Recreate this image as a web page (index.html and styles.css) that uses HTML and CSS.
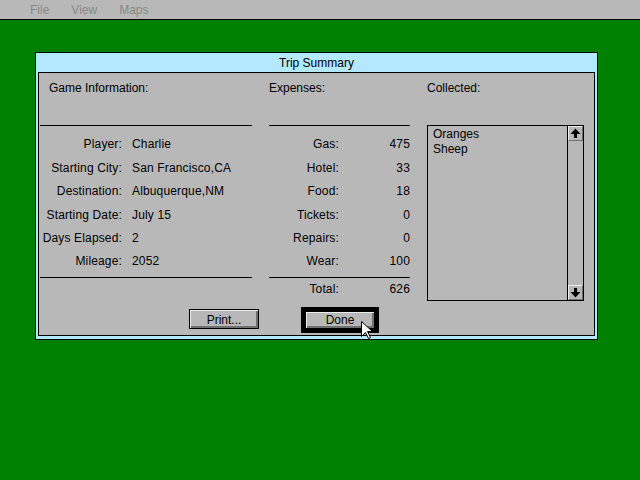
FILE: index.html
```html
<!DOCTYPE html>
<html>
<head>
<meta charset="utf-8">
<link rel="stylesheet" href="styles.css">
</head>
<body>
<div class="menubar"><span>File</span><span>View</span><span>Maps</span></div>
<div class="dialog">
  <div class="title">Trip Summary</div>
  <div class="panel">
    <div class="columns">
      <div class="col info">
        <div class="head">Game Information:</div>
        <div class="rule"></div>
        <div class="rows">
          <div class="row"><span class="lbl">Player:</span><span class="val">Charlie</span></div>
          <div class="row"><span class="lbl">Starting City:</span><span class="val">San Francisco,CA</span></div>
          <div class="row"><span class="lbl">Destination:</span><span class="val">Albuquerque,NM</span></div>
          <div class="row"><span class="lbl">Starting Date:</span><span class="val">July 15</span></div>
          <div class="row"><span class="lbl">Days Elapsed:</span><span class="val">2</span></div>
          <div class="row"><span class="lbl">Mileage:</span><span class="val">2052</span></div>
        </div>
        <div class="rule"></div>
      </div>
      <div class="col expenses">
        <div class="head">Expenses:</div>
        <div class="rule"></div>
        <div class="rows">
          <div class="row"><span class="lbl">Gas:</span><span class="val">475</span></div>
          <div class="row"><span class="lbl">Hotel:</span><span class="val">33</span></div>
          <div class="row"><span class="lbl">Food:</span><span class="val">18</span></div>
          <div class="row"><span class="lbl">Tickets:</span><span class="val">0</span></div>
          <div class="row"><span class="lbl">Repairs:</span><span class="val">0</span></div>
          <div class="row"><span class="lbl">Wear:</span><span class="val">100</span></div>
        </div>
        <div class="rule"></div>
        <div class="row total"><span class="lbl">Total:</span><span class="val">626</span></div>
      </div>
      <div class="col collected">
        <div class="head">Collected:</div>
        <div class="listbox">
          <div class="items">
            <div class="item">Oranges</div>
            <div class="item">Sheep</div>
          </div>
          <div class="scrollbar">
            <div class="sbtn"><svg width="13" height="13" viewBox="0 0 13 13"><polygon points="6.5,1.5 11.5,7 8,7 8,11 5,11 5,7 1.5,7" fill="#000"/></svg></div>
            <div class="track"></div>
            <div class="sbtn"><svg width="13" height="13" viewBox="0 0 13 13"><polygon points="6.5,11.5 11.5,6 8,6 8,2 5,2 5,6 1.5,6" fill="#000"/></svg></div>
          </div>
        </div>
      </div>
    </div>
    <div class="footer">
      <button class="btn print">Print...</button>
      <div class="default-ring"><button class="btn done">Done</button></div>
    </div>
  </div>
</div>
<svg class="cursor" width="12" height="19" viewBox="0 0 12 19"><polygon points="0.5,0.5 0.5,15.5 4.5,11.5 7.5,17.5 9.5,16.5 6.5,10.5 11.5,10.5" fill="#fff" stroke="#000" stroke-width="1"/></svg>
</body>
</html>
```
FILE: styles.css
```css
html, body {
  margin: 0;
  padding: 0;
}
body {
  background: #008000;
  width: 640px;
  height: 480px;
  overflow: hidden;
  font-family: "Liberation Sans", Arial, sans-serif;
  font-size: 12px;
  color: #000;
}
.menubar {
  box-sizing: border-box;
  height: 20px;
  padding-top: 1px;
  line-height: 18px;
  background: #b8b8b8;
  border-bottom: 1px solid #000;
  padding-left: 30px;
  display: flex;
  gap: 22px;
  color: #888888;
}
.dialog {
  box-sizing: border-box;
  margin: 32px 0 0 35px;
  width: 563px;
  height: 288px;
  border: 1px solid #000;
  background: #b4e8ff;
  padding: 0 2px 3px 2px;
}
.title {
  box-sizing: border-box;
  height: 19px;
  padding-top: 1px;
  line-height: 18px;
  text-align: center;
}
.panel {
  box-sizing: border-box;
  height: 264px;
  border: 1px solid #000;
  background: #b8b8b8;
}
.columns {
  display: flex;
  height: 228px;
  padding-left: 1px;
  gap: 17px;
}
.col {
  display: flex;
  flex-direction: column;
}
.info { width: 212px; }
.expenses { width: 141px; }
.collected { width: 157px; }
.head {
  box-sizing: border-box;
  height: 52px;
  padding-top: 8px;
  line-height: 14px;
}
.info .head { padding-left: 9px; }
.rule {
  height: 1px;
  background: #000;
}
.rows {
  padding: 7.4px 0 3.2px;
}
.row {
  display: flex;
  height: 23.4px;
  line-height: 23.4px;
  white-space: nowrap;
  letter-spacing: 0.15px;
}
.info .lbl {
  width: 82px;
  text-align: right;
  margin-right: 10px;
}
.expenses .lbl {
  width: 70px;
  text-align: right;
}
.expenses .val {
  flex: 1;
  text-align: right;
}
.row.total {
  box-sizing: border-box;
  height: 20px;
  padding-top: 1px;
  line-height: 20px;
}
.listbox {
  box-sizing: border-box;
  height: 176px;
  border: 1px solid #000;
  display: flex;
}
.items {
  flex: 1;
  padding: 1px 0 0 5px;
}
.item {
  line-height: 15px;
}
.scrollbar {
  width: 15px;
  border-left: 1px solid #000;
  display: flex;
  flex-direction: column;
}
.sbtn {
  box-sizing: border-box;
  width: 15px;
  height: 15px;
  background: #b8b8b8;
  border-top: 1px solid #ececec;
  border-left: 1px solid #ececec;
  border-right: 1px solid #707070;
  border-bottom: 1px solid #707070;
}
.sbtn svg {
  display: block;
}
.track { flex: 1; }
.footer {
  display: flex;
  align-items: flex-start;
  padding-left: 150px;
}
.btn {
  box-sizing: border-box;
  width: 70px;
  padding: 0;
  margin: 0;
  font-family: inherit;
  font-size: 12px;
  color: #000;
  background: #b8b8b8;
  border: 1px solid #000;
  box-shadow: inset 1px 1px 0 #ececec, inset -2px -2px 0 #707070;
  text-align: center;
}
.print {
  height: 20px;
  margin-top: 8px;
  padding-top: 1px;
}
.default-ring {
  box-sizing: border-box;
  width: 78px;
  height: 26px;
  border: 4px solid #000;
  margin: 6px 0 0 42px;
}
.done {
  height: 18px;
  display: block;
}
.cursor {
  position: absolute;
  left: 361px;
  top: 321px;
}
```
